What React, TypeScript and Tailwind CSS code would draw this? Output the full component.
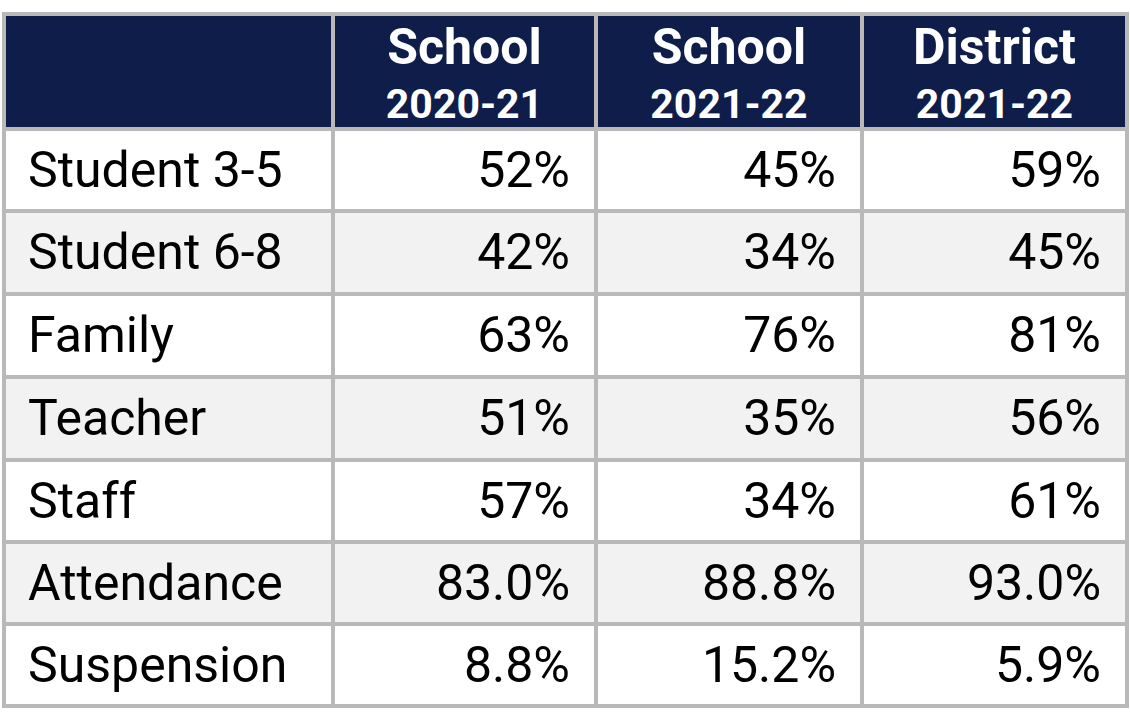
import React from 'react';

interface Row {
    label: string;
    values: [string, string, string];
}

const headers: { title: string; year: string }[] = [
    { title: 'School', year: '2020-21' },
    { title: 'School', year: '2021-22' },
    { title: 'District', year: '2021-22' },
];

const rows: Row[] = [
    { label: 'Student 3-5', values: ['52%', '45%', '59%'] },
    { label: 'Student 6-8', values: ['42%', '34%', '45%'] },
    { label: 'Family', values: ['63%', '76%', '81%'] },
    { label: 'Teacher', values: ['51%', '35%', '56%'] },
    { label: 'Staff', values: ['57%', '34%', '61%'] },
    { label: 'Attendance', values: ['83.0%', '88.8%', '93.0%'] },
    { label: 'Suspension', values: ['8.8%', '15.2%', '5.9%'] },
];

const App: React.FC = () => {
    return (
        <div className="min-h-screen bg-white pt-[12px] pl-[2px]" style={{ fontFamily: 'Roboto, "Liberation Sans", sans-serif' }}>
            <div className="grid w-fit grid-cols-[325px_259px_262px_261px] grid-rows-[111px_78px_79px_79px_79px_78px_78px_78px] gap-[4px] bg-[#b9b9b9] p-[4px]">
                <div className="bg-[#0f1d4a]" />
                {headers.map((h, i) => (
                    <div key={i} className="flex flex-col items-center justify-start bg-[#0f1d4a] pt-[3px] font-bold text-white">
                        <span className="text-[50px] leading-[56px]">{h.title}</span>
                        <span className="text-[41px] leading-[58px]">{h.year}</span>
                    </div>
                ))}
                {rows.map((row, r) => {
                    const bg = r % 2 === 0 ? 'bg-white' : 'bg-[#f2f2f2]';
                    return (
                        <React.Fragment key={row.label}>
                            <div className={`${bg} flex items-center pl-[22px] text-[50px] text-black`}>{row.label}</div>
                            {row.values.map((v, i) => (
                                <div key={i} className={`${bg} flex items-center justify-end pr-[24px] text-[50px] text-black`}>
                                    {v}
                                </div>
                            ))}
                        </React.Fragment>
                    );
                })}
            </div>
        </div>
    );
};

export default App;
